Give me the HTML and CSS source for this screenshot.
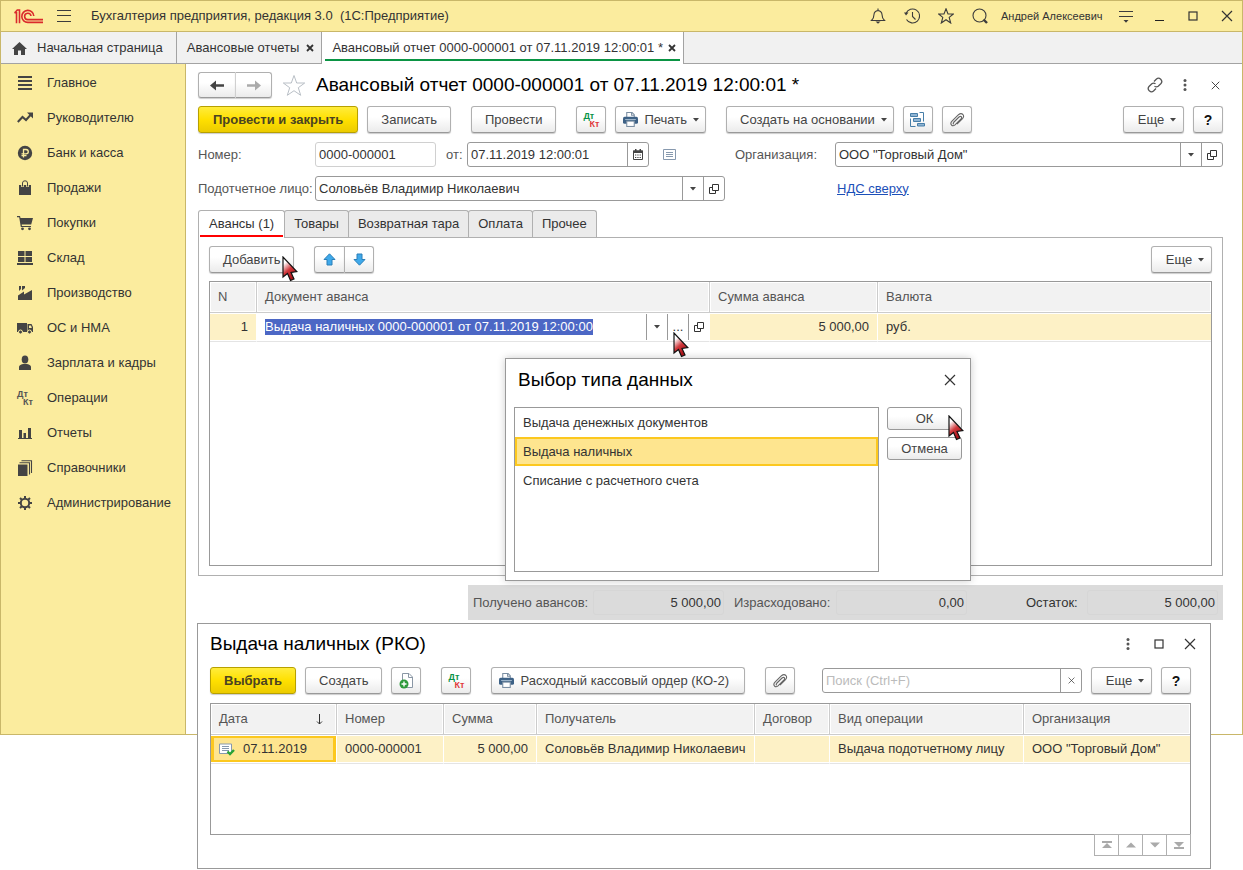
FILE: index.html
```html
<!DOCTYPE html>
<html lang="ru">
<head>
<meta charset="utf-8">
<title>Бухгалтерия предприятия</title>
<link rel="stylesheet" href="styles.css">
</head>
<body>
<svg class="sprite" aria-hidden="true">
  <defs><linearGradient id="cursorFill" x1="0" y1="0" x2=".5" y2="1"><stop offset=".25" stop-color="#fff"/><stop offset=".6" stop-color="#d0383c"/><stop offset="1" stop-color="#a81016"/></linearGradient></defs>
  <symbol id="i-close" viewBox="0 0 12 12"><path d="M1 1L11 11M11 1L1 11" fill="none" stroke="currentColor" stroke-width="1.2"/></symbol>
  <symbol id="i-close-bold" viewBox="0 0 8 8"><path d="M1 1L7 7M7 1L1 7" fill="none" stroke="currentColor" stroke-width="1.8"/></symbol>
  <symbol id="i-max" viewBox="0 0 12 12"><rect x="2" y="2" width="8" height="8" fill="none" stroke="currentColor" stroke-width="1.2"/></symbol>
  <symbol id="i-dots" viewBox="0 0 4 14"><circle cx="2" cy="2.5" r="1.5"/><circle cx="2" cy="7" r="1.5"/><circle cx="2" cy="11.5" r="1.5"/></symbol>
  <symbol id="i-caret" viewBox="0 0 6 4"><path d="M0 0H6L3 3.500Z"/></symbol>
  <symbol id="i-open" viewBox="0 0 10 10"><path d="M3.5 .5H9.5V6.5H3.5ZM3 3.5H.5V9.5H6.500V7" fill="none" stroke="currentColor"/></symbol>
  <symbol id="i-clip" viewBox="0 0 16 16"><path d="M4.500 10.500L10 5Q11.500 3.800 12.300 4.700Q13 5.600 12 6.800L6 12.800Q4 14.500 2.500 13Q1 11.300 3 9.200L9.500 2.700Q12 .7 13.900 2.500Q15.500 4.300 13.500 6.700L8 12.200M4.500 10.500Q3.700 12 5 12" fill="none" stroke="#666" stroke-width="1.1"/></symbol>
  <symbol id="i-print" viewBox="0 0 14 14"><path d="M3.500 5V.500H8.500L10.500 2.500V5" fill="#fff" stroke="#7b8fa3"/><path d="M8 .5V3H10.500" fill="none" stroke="#7b8fa3"/><rect y="4.500" width="14" height="6.500" rx="1.500" fill="#3d6186"/><path d="M2 7H12" stroke="#9db5cb"/><rect x="3.500" y="8.500" width="7" height="5" fill="#fff" stroke="#7b8fa3"/></symbol>
  <symbol id="i-cursor" viewBox="0 0 16 26"><path d="M1 1V21L5.500 17.500L8.500 24.500L12 23L9 16.500L14.800 15.500Z" fill="url(#cursorFill)" stroke="#111" stroke-width="1.2"/></symbol>
</svg>

<div class="desktop">
  <div class="app">
    <header class="titlebar">
      <svg class="logo" viewBox="0 0 29 15" width="29" height="15" fill="none" stroke="#da2a2c" stroke-width="1.600"><path d="M.5 3.800H2.500V14.200M.5 3.800Q2 2.500 3.300 1H5.500V14.200"/><path d="M19.800 7A6 6 0 1 0 14 13.400H29"/><path d="M17 7A3.200 3.200 0 1 0 14 10.600H29"/></svg>
      <button class="icon-btn" aria-label="Меню"><svg width="14" height="12" stroke="#3c3c3c"><path d="M0 .5H14M0 5.500H14M0 11.500H14"/></svg></button>
      <span class="app-title">Бухгалтерия предприятия, редакция 3.0&nbsp; (1С:Предприятие)</span>
      <div class="sys-icons">
        <button class="icon-btn" aria-label="Уведомления"><svg width="16" height="16" viewBox="0 0 16 16" fill="none" stroke="#3c3c3c" stroke-width="1.1"><path d="M1.500 12.500Q4 10 4 6.500Q4.200 3.300 8 2.500Q11.800 3.300 12 6.500Q12 10 14.500 12.500ZM8 2.500V.5"/><path d="M5.500 13.500H10.500L8 15.800Z" fill="#3c3c3c" stroke="none"/></svg></button>
        <button class="icon-btn" aria-label="История"><svg width="16" height="16" viewBox="0 0 16 16" fill="none" stroke="#3c3c3c" stroke-width="1.100"><path d="M2 5.500A7 7 0 1 1 2.500 11.500M8.500 4V8.500L11.500 11.500"/><path d="M0 4.500L4.500 4.500L2 7.500Z" fill="#3c3c3c" stroke="none"/></svg></button>
        <button class="icon-btn" aria-label="Избранное"><svg width="16" height="16" viewBox="0 0 16 16" fill="none" stroke="#3c3c3c" stroke-width="1.100"><path d="M8 .8L10 6H15.300L11.200 9.400L12.700 15L8 11.700L3.300 15L4.800 9.400L.7 6H6Z"/></svg></button>
        <button class="icon-btn" aria-label="Поиск"><svg width="16" height="16" viewBox="0 0 16 16" fill="none" stroke="#3c3c3c" stroke-width="1.100"><circle cx="7.500" cy="7.500" r="6.500"/><path d="M11.500 11.500L15 15" stroke-width="2.400"/></svg></button>
      </div>
      <span class="user">Андрей Алексеевич</span>
      <div class="win-icons">
        <button class="icon-btn" aria-label="Настройки"><svg width="14" height="13" stroke="#3c3c3c"><path d="M0 1.500H14M0 6.500H14"/><path d="M4.500 10H9.500L7 12.700Z" fill="#3c3c3c" stroke="none"/></svg></button>
        <button class="icon-btn" aria-label="Свернуть"><svg width="10" height="12" stroke="#222"><path d="M0 10.500H9"/></svg></button>
        <button class="icon-btn" aria-label="Развернуть"><svg width="12" height="12"><use href="#i-max"/></svg></button>
        <button class="icon-btn" aria-label="Закрыть"><svg width="12" height="12"><use href="#i-close"/></svg></button>
      </div>
    </header>

    <nav class="tabbar" aria-label="Открытые окна">
      <a class="wtab wtab-home" href="#"><svg width="15" height="13" viewBox="0 0 15 13" fill="#444"><path d="M7.500 0L15 7H13V13H9V8.500H6V13H2V7H0Z"/></svg>Начальная страница</a>
      <div class="wtab"><a href="#">Авансовые отчеты</a><button class="icon-btn" aria-label="Закрыть вкладку"><svg width="8" height="8"><use href="#i-close-bold"/></svg></button></div>
      <div class="wtab wtab-active"><a href="#">Авансовый отчет 0000-000001 от 07.11.2019 12:00:01 *</a><button class="icon-btn" aria-label="Закрыть вкладку"><svg width="8" height="8"><use href="#i-close-bold"/></svg></button></div>
    </nav>

    <div class="workspace">
      <nav class="sidebar" aria-label="Разделы">
        <a href="#"><svg viewBox="0 0 16 16"><path d="M1 1H15V3H1ZM1 5H15V7H1ZM1 9H15V11H1ZM1 13H15V15H1Z"/></svg>Главное</a>
        <a href="#"><svg viewBox="0 0 16 16"><path d="M.8 12L5.500 7L9 10L13.500 5" fill="none" stroke="#444" stroke-width="2"/><path d="M10 2.500H16V8.500Z"/></svg>Руководителю</a>
        <a href="#"><svg viewBox="0 0 16 16"><circle cx="8" cy="8" r="7.200"/><path d="M6.500 12.500V4.500H9Q11.300 4.700 11.300 6.700Q11.300 8.700 9 8.800H4.500M4.500 10.700H9.500" fill="none" stroke="#fbec9e" stroke-width="1.300"/></svg>Банк и касса</a>
        <a href="#"><svg viewBox="0 0 16 16"><path d="M2 5H14V15H2Z"/><path d="M5.500 7V3Q5.500 .8 8 .8Q10.500 .8 10.500 3V7" fill="none" stroke="#fbec9e" stroke-width="2.600"/><path d="M5.500 6.500V3Q5.500 .8 8 .8Q10.500 .8 10.500 3V6.500" fill="none" stroke="#444"/></svg>Продажи</a>
        <a href="#"><svg viewBox="0 0 16 16"><path d="M0 1H3L3.500 3H16L14.200 9.500H4.700L4.900 11H14V12H3.800L2.200 2.200H0Z"/><circle cx="5.500" cy="13.800" r="1.400"/><circle cx="12.500" cy="13.800" r="1.400"/></svg>Покупки</a>
        <a href="#"><svg viewBox="0 0 16 16"><path d="M1 1H7.500V6H1ZM8.500 1H15V6H8.500ZM1 7H7.500V12H1ZM8.500 7H15V12H8.500ZM0 13H16V15H0Z"/></svg>Склад</a>
        <a href="#"><svg viewBox="0 0 16 16"><path d="M1 15V10.500L7 6.500V9.500L15 5V15ZM2 1H4V4L2 6ZM5 1H8V3L5 5.500Z"/></svg>Производство</a>
        <a href="#"><svg viewBox="0 0 16 16"><path d="M0 3H10V12H0ZM10.500 4H14.500L16 7V12H10.500Z"/><path d="M12 5.500H14L14.800 8H12Z" fill="#fbec9e"/><g stroke="#fbec9e"><circle cx="3.500" cy="12" r="2"/><circle cx="12.500" cy="12" r="2"/></g></svg>ОС и НМА</a>
        <a href="#"><svg viewBox="0 0 16 16"><ellipse cx="8" cy="4.500" rx="3.300" ry="3.900"/><path d="M2 15V12Q2 10 6 9H10Q14 10 14 12V15Z"/></svg>Зарплата и кадры</a>
        <a href="#"><span class="dtkt dtkt-dark" aria-hidden="true"><b>Дт</b><b>Кт</b></span>Операции</a>
        <a href="#"><svg viewBox="0 0 16 16"><path d="M2 5H5V13H2ZM6.500 8H9V13H6.500ZM11 3H14V13H11ZM1 13H15V14H1Z"/></svg>Отчеты</a>
        <a href="#"><svg viewBox="0 0 16 16"><path d="M1 4.500H10.500V16H1Z"/><path d="M2.500 2.800H12.500V14.500M4.500 .8H14.500V13" fill="none" stroke="#444" stroke-width="1.100"/></svg>Справочники</a>
        <a href="#"><svg viewBox="0 0 16 16"><g fill="none" stroke="#444" stroke-width="2"><circle cx="8" cy="8" r="4.200"/><path d="M8 1V3.500M8 12.500V15M1 8H3.500M12.500 8H15M3 3L4.800 4.800M11.200 11.200L13 13M3 13L4.800 11.200M11.200 4.800L13 3"/></g></svg>Администрирование</a>
      </nav>

      <main class="doc">
        <div class="doc-head">
          <div class="btn-pair">
            <button class="btn" aria-label="Назад"><svg width="14" height="11" viewBox="0 0 14 11" fill="#444"><path d="M0 5.500L6 .5V4.200H14V6.800H6V10.500Z"/></svg></button>
            <button class="btn" aria-label="Вперед"><svg width="14" height="11" viewBox="0 0 14 11" fill="#aaa"><path d="M14 5.500L8 .5V4.200H0V6.800H8V10.500Z"/></svg></button>
          </div>
          <button class="icon-btn fav" aria-label="В избранное"><svg width="24" height="23" viewBox="0 0 24 23" fill="#fff" stroke="#b9bfc6"><path d="M12 1.500L14.700 9H22.700L16.300 13.700L18.700 21.300L12 16.700L5.300 21.300L7.700 13.700L1.300 9H9.300Z"/></svg></button>
          <h1>Авансовый отчет 0000-000001 от 07.11.2019 12:00:01 *</h1>
          <div class="doc-tools">
            <button class="icon-btn" aria-label="Ссылка"><svg width="16" height="16" viewBox="0 0 16 16" fill="none" stroke="#555" stroke-width="1.300"><path d="M7 4.500L9.500 2Q11.500 .2 13.700 2.200Q15.800 4.500 14 6.500L11.200 9.300Q9.300 10.500 7.500 9.200M9 11.500L6.500 14Q4.500 15.800 2.300 13.800Q.2 11.500 2 9.500L4.800 6.700Q6.700 5.500 8.500 6.800"/></svg></button>
            <button class="icon-btn" aria-label="Еще действия"><svg width="4" height="14" fill="#555"><use href="#i-dots"/></svg></button>
            <button class="icon-btn doc-close" aria-label="Закрыть документ"><svg width="9" height="9"><use href="#i-close"/></svg></button>
          </div>
        </div>

        <div class="commands">
          <button class="btn btn-primary btn-wide">Провести и закрыть</button>
          <button class="btn">Записать</button>
          <button class="btn group">Провести</button>
          <button class="btn btn-square group" aria-label="Дт Кт"><span class="dtkt"><b>Дт</b><b>Кт</b></span></button>
          <button class="btn btn-menu btn-print"><svg width="15" height="15"><use href="#i-print"/></svg>Печать<svg class="caret"><use href="#i-caret"/></svg></button>
          <button class="btn btn-menu group">Создать на основании<svg class="caret"><use href="#i-caret"/></svg></button>
          <button class="btn btn-square" aria-label="Структура подчиненности"><svg width="15" height="15" viewBox="0 0 15 15" fill="#8fb4d3" stroke="#477ea8"><path d="M.5 1.500H7.500V4.500H.5ZM3.500 6.500H10.500V9.500H3.500ZM7.500 11.500H14.500V14H7.500Z"/><path d="M9.500 .5H13.500V9.500M.5 6.500V14.500H5.500" fill="none"/></svg></button>
          <button class="btn btn-square" aria-label="Файлы"><svg width="16" height="16"><use href="#i-clip"/></svg></button>
          <button class="btn btn-menu btn-more push">Еще<svg class="caret"><use href="#i-caret"/></svg></button>
          <button class="btn btn-square btn-help">?</button>
        </div>

        <div class="fields">
          <div class="field-row">
            <label class="lbl" for="num">Номер:</label>
            <input class="box box-num" id="num" value="0000-000001">
            <label class="lbl-short" for="date">от:</label>
            <div class="combo combo-date"><input id="date" value="07.11.2019 12:00:01"><button aria-label="Календарь"><svg width="10" height="11" viewBox="0 0 10 11"><path d="M.5 2H9.500V10.500H.5Z" fill="none" stroke="#444"/><path d="M0 1.500H10V4H0ZM2 0H3.500V2H2ZM6.500 0H8V2H6.500Z" fill="#444"/><path d="M2 6H8M2 8.500H8" stroke="#444" stroke-dasharray="1.300 1"/></svg></button></div>
            <svg class="note" width="13" height="11" fill="none" stroke="#8799ae"><path d="M.5 .5H12.500V10.500H.5ZM3 3.500H10M3 5.500H10M3 7.500H10"/></svg>
          </div>
          <div class="field-row">
            <label class="lbl-org" for="org">Организация:</label>
            <div class="combo"><input id="org" value='ООО "Торговый Дом"'><button aria-label="Выбрать"><svg class="caret"><use href="#i-caret"/></svg></button><button aria-label="Открыть"><svg width="10" height="10"><use href="#i-open"/></svg></button></div>
          </div>
          <div class="field-row">
            <label class="lbl" for="person">Подотчетное лицо:</label>
            <div class="combo combo-person"><input id="person" value="Соловьёв Владимир Николаевич"><button aria-label="Выбрать"><svg class="caret"><use href="#i-caret"/></svg></button><button aria-label="Открыть"><svg width="10" height="10"><use href="#i-open"/></svg></button></div>
          </div>
          <div class="field-row"><a class="vat" href="#">НДС сверху</a></div>
        </div>

        <div class="tabs" role="tablist">
          <button role="tab" aria-selected="true">Авансы (1)</button><button role="tab" aria-selected="false">Товары</button><button role="tab" aria-selected="false">Возвратная тара</button><button role="tab" aria-selected="false">Оплата</button><button role="tab" aria-selected="false">Прочее</button>
        </div>
        <section class="panel">
          <div class="panel-tools">
            <button class="btn">Добавить</button>
            <div class="btn-pair group">
              <button class="btn" aria-label="Вверх"><svg width="13" height="13" viewBox="0 0 13 13" fill="#3fa9ea" stroke="#2a7fb8"><path d="M6.500 .8L12 6.500H9V12H4V6.500H1Z"/></svg></button>
              <button class="btn" aria-label="Вниз"><svg width="13" height="13" viewBox="0 0 13 13" fill="#3fa9ea" stroke="#2a7fb8"><path d="M6.500 12.200L12 6.500H9V1H4V6.500H1Z"/></svg></button>
            </div>
            <button class="btn btn-menu btn-more push">Еще<svg class="caret"><use href="#i-caret"/></svg></button>
          </div>
          <div class="grid-box grid-main">
            <table>
              <colgroup><col class="c-n"><col class="c-doc"><col class="c-sum"><col></colgroup>
              <thead><tr><th>N</th><th>Документ аванса</th><th>Сумма аванса</th><th>Валюта</th></tr></thead>
              <tbody><tr><td class="num">1</td>
                <td class="editing"><div class="editor"><input aria-label="Документ аванса" value="Выдача наличных 0000-000001 от 07.11.2019 12:00:00"><button class="push" aria-label="Список"><svg class="caret"><use href="#i-caret"/></svg></button><button>...</button><button aria-label="Открыть"><svg width="10" height="10"><use href="#i-open"/></svg></button></div></td>
                <td class="num">5 000,00</td><td>руб.</td></tr></tbody>
            </table>
          </div>
        </section>

        <div class="totals">
          <label class="t-a" for="got">Получено авансов:</label><output id="got">5 000,00</output>
          <label class="t-b" for="spent">Израсходовано:</label><output id="spent">0,00</output>
          <label class="t-c" for="rest">Остаток:</label><output id="rest">5 000,00</output>
        </div>
      </main>
    </div>
  </div>

  <section class="dialog" role="dialog" aria-labelledby="dlg-title">
    <div class="dialog-head"><h2 id="dlg-title">Выбор типа данных</h2><button class="icon-btn" aria-label="Закрыть"><svg width="12" height="12"><use href="#i-close"/></svg></button></div>
    <div class="dialog-body">
      <ul class="options" role="listbox" aria-labelledby="dlg-title">
        <li role="option" aria-selected="false">Выдача денежных документов</li>
        <li role="option" aria-selected="true">Выдача наличных</li>
        <li role="option" aria-selected="false">Списание с расчетного счета</li>
      </ul>
      <div class="dialog-actions"><button class="btn">ОК</button><button class="btn">Отмена</button></div>
    </div>
  </section>

  <section class="picker" role="dialog" aria-labelledby="pick-title">
    <div class="picker-head"><h2 id="pick-title">Выдача наличных (РКО)</h2>
      <button class="icon-btn" aria-label="Еще действия"><svg width="12" height="14" fill="#555"><use href="#i-dots"/></svg></button>
      <button class="icon-btn" aria-label="Развернуть"><svg width="12" height="12"><use href="#i-max"/></svg></button>
      <button class="icon-btn" aria-label="Закрыть"><svg width="12" height="12"><use href="#i-close"/></svg></button>
    </div>
    <div class="commands">
      <button class="btn btn-primary">Выбрать</button>
      <button class="btn">Создать</button>
      <button class="btn btn-square" aria-label="Скопировать"><svg width="15" height="16" viewBox="0 0 15 16"><path d="M3.500 .5H10L13.500 4V14.500H3.500Z" fill="#fff" stroke="#8a97a5"/><path d="M9.500 .5V4.500H13.500" fill="none" stroke="#8a97a5"/><circle cx="5" cy="11" r="4.500" fill="#2f9a3c"/><path d="M5 8.500V13.500M2.500 11H7.500" stroke="#fff" stroke-width="1.400"/></svg></button>
      <button class="btn btn-square group" aria-label="Дт Кт"><span class="dtkt"><b>Дт</b><b>Кт</b></span></button>
      <button class="btn btn-menu btn-print btn-order group"><svg width="15" height="15"><use href="#i-print"/></svg>Расходный кассовый ордер (КО-2)</button>
      <button class="btn btn-square group" aria-label="Файлы"><svg width="16" height="16"><use href="#i-clip"/></svg></button>
      <div class="combo combo-search push"><input aria-label="Поиск" placeholder="Поиск (Ctrl+F)"><button aria-label="Очистить"><svg width="7" height="7"><use href="#i-close"/></svg></button></div>
      <button class="btn btn-menu btn-more">Еще<svg class="caret"><use href="#i-caret"/></svg></button>
      <button class="btn btn-square btn-help">?</button>
    </div>
    <div class="grid-box grid-pick">
      <table>
        <colgroup><col class="p-date"><col class="p-num"><col class="p-sum"><col class="p-who"><col class="p-contract"><col class="p-kind"><col></colgroup>
        <thead><tr><th><span class="sorted">Дата<svg width="7" height="11" viewBox="0 0 7 11" fill="none" stroke="#333"><path d="M3.500 0V10M1 7.500L3.500 10L6 7.500"/></svg></span></th><th>Номер</th><th>Сумма</th><th>Получатель</th><th>Договор</th><th>Вид операции</th><th>Организация</th></tr></thead>
        <tbody><tr><td class="current"><span class="dated"><svg width="16" height="13" viewBox="0 0 16 13"><path d="M.5 1H12.500V10.500H.5Z" fill="#fff" stroke="#8799ae"/><path d="M3 3.500H10M3 5.500H10M3 7.500H10" stroke="#8799ae"/><path d="M8.500 8.500L11 11L15 7" fill="none" stroke="#2aa336" stroke-width="2.400"/></svg>07.11.2019</span></td><td>0000-000001</td><td class="num">5 000,00</td><td>Соловьёв Владимир Николаевич</td><td></td><td>Выдача подотчетному лицу</td><td>ООО "Торговый Дом"</td></tr></tbody>
      </table>
    </div>
    <div class="pager">
      <button aria-label="В начало"><svg width="10" height="8"><path d="M0 0H10V2H0ZM0 7L5 2L10 7Z"/></svg></button>
      <button aria-label="Вверх"><svg width="10" height="8"><path d="M0 6.500L5 1.500L10 6.500Z"/></svg></button>
      <button aria-label="Вниз"><svg width="10" height="8"><path d="M0 1.500L5 6.500L10 1.500Z"/></svg></button>
      <button aria-label="В конец"><svg width="10" height="8"><path d="M0 6H10V8H0ZM0 1L5 6L10 1Z"/></svg></button>
    </div>
  </section>

  <svg class="pointer pointer-add" aria-hidden="true"><use href="#i-cursor"/></svg>
  <svg class="pointer pointer-cell" aria-hidden="true"><use href="#i-cursor"/></svg>
  <svg class="pointer pointer-ok" aria-hidden="true"><use href="#i-cursor"/></svg>
</div>
</body>
</html>
```
FILE: styles.css
```css
* { box-sizing: border-box; }
body { margin: 0; background: #fff; color: #333; font: 13px/16px "Liberation Sans", Arial, sans-serif; }
button, input { font: inherit; color: inherit; margin: 0; }
button { padding: 0; border: 0; background: none; }
a { color: inherit; text-decoration: none; }
h1, h2 { margin: 0; color: #000; font-size: 19px; font-weight: 400; line-height: 22px; white-space: nowrap; }
svg { display: block; flex: none; }
.sprite { position: absolute; width: 0; height: 0; }

.desktop { position: relative; min-height: 100vh; }
.app { border: 1px solid #c9b769; background: #fff; }
.icon-btn { display: flex; align-items: center; justify-content: center; color: #333; }
.push { margin-left: auto; }

/* Title bar */
.titlebar { display: flex; align-items: center; height: 31px; padding: 0 9px 0 13px; background: #fbec9e; border-bottom: 1px solid #c9b769; }
.logo { margin-right: 14px; }
.app-title { margin-left: 20px; white-space: nowrap; }
.sys-icons { display: flex; gap: 18px; margin-left: auto; }
.user { width: 104px; margin: 0 14px 0 13px; font-size: 11px; white-space: nowrap; }
.win-icons { display: flex; gap: 22px; align-items: center; }

/* Window tabs */
.tabbar { display: flex; height: 32px; background: #f1f1f1; box-shadow: inset 0 -1px #a3a3a3; }
.wtab { display: flex; align-items: center; gap: 7px; padding: 0 7px 0 10px; border-right: 1px solid #a3a3a3; white-space: nowrap; }
.wtab-home { gap: 10px; padding: 0 13px 0 11px; }
.wtab-active { position: relative; gap: 5px; background: #fff; }
.wtab-active::after { content: ""; position: absolute; left: 3px; right: 3px; bottom: 3px; height: 2px; background: #0b9444; }

/* Sections */
.workspace { display: flex; }
.sidebar { width: 185px; flex: none; padding-top: 1px; background: #fbec9e; border-right: 1px solid #c9b769; }
.sidebar a { display: flex; align-items: center; gap: 14px; height: 35px; padding-left: 16px; white-space: nowrap; }
.sidebar svg { width: 16px; height: 16px; fill: #444; }
.dtkt { display: flex; flex-direction: column; width: 16px; font-size: 9px; line-height: 8px; text-align: left; }
.dtkt b:first-child { color: #0a9347; }
.dtkt b:last-child { color: #e0393c; align-self: flex-end; }
.dtkt-dark b:first-child, .dtkt-dark b:last-child { color: #555; }

/* Document */
.doc { flex: 1; min-width: 0; padding: 8px 19px 114px 12px; }
.doc-head { display: flex; align-items: center; height: 26px; margin-bottom: 8px; }
.fav { margin: 0 10px 0 10px; }
.doc-tools { display: flex; align-items: center; gap: 20px; margin-left: auto; }
.doc-close { width: 16px; }

.btn { display: flex; align-items: center; justify-content: center; height: 27px; padding: 0 13px; color: #444; background: linear-gradient(#fff 40%, #ebebeb); border: 1px solid #b0b0b0; border-bottom-color: #999; border-radius: 3px; box-shadow: 0 1px 1px #ccc; white-space: nowrap; }
.btn-primary { font-weight: 700; color: #4a4322; background: linear-gradient(#ffec3c, #ffe000 50%, #eccb00); border-color: #b7a000; }
.btn-wide { padding: 0 14px; }
.btn-square { width: 30px; padding: 0; }
.btn-help { font-weight: 700; color: #111; font-size: 14px; }
.btn-menu { gap: 6px; padding-right: 6px; }
.btn-print { padding-left: 7px; }
.btn-order { padding-right: 15px; }
.btn-more { width: 61px; }
.caret { width: 6px; height: 4px; fill: #444; }
.btn-pair { display: flex; }
.btn-pair .btn { width: 37px; height: 26px; padding: 0; }
.btn-pair .btn:first-child { border-radius: 3px 0 0 3px; border-right: 0; }
.btn-pair .btn:last-child { border-radius: 0 3px 3px 0; border-left-color: #d0d0d0; }

.commands { display: flex; align-items: center; gap: 9px; }
.commands .group { margin-left: 11px; }

.fields { display: grid; grid-template-columns: 537px 1fr; gap: 9px 0; margin-top: 9px; }
.field-row { display: flex; align-items: center; height: 25px; }
.lbl, .lbl-short, .lbl-org { color: #555; white-space: nowrap; flex: none; }
.lbl { width: 117px; }
.lbl-short { width: 31px; padding-left: 10px; }
.lbl-org { width: 100px; }
.box, .combo { height: 25px; border: 1px solid #999; border-radius: 3px; background: #fff; }
.box { padding: 0 3px; outline: 0; }
.box-num { width: 121px; border-color: #d0d0d0; }
.combo { display: flex; flex: 1; overflow: hidden; }
.combo input { flex: 1; min-width: 0; padding: 0 3px; border: 0; outline: 0; background: none; }
.combo input::placeholder { color: #bbb; }
.combo button { display: flex; align-items: center; justify-content: center; width: 21px; border-left: 1px solid #999; }
.combo-date { flex: 0 0 182px; }
.combo-person { flex: 0 0 410px; }
.note { margin-left: 14px; }
.vat { margin-left: 102px; color: #1c4fb8; text-decoration: underline; }

.tabs { display: flex; margin-top: 9px; }
.tabs button { height: 27px; padding: 0 9px; margin-right: -1px; border: 1px solid #b0b0b0; border-bottom: 0; border-radius: 3px 3px 0 0; background: #ebebeb; white-space: nowrap; }
.tabs [aria-selected="true"] { position: relative; z-index: 1; height: 28px; margin-bottom: -1px; padding: 0 10px 1px; background: #fff; }
.tabs [aria-selected="true"]::after { content: ""; position: absolute; left: 1px; right: 1px; bottom: 1px; height: 2px; background: #f00; }
.panel { padding: 8px 10px 9px; border: 1px solid #b0b0b0; }
.panel-tools { display: flex; gap: 9px; margin-bottom: 8px; }
.panel-tools .group { margin-left: 11px; }
.panel-tools .btn-pair .btn { width: 30px; height: 27px; }
.panel-tools .btn-pair .btn:last-child { border-left-color: #b0b0b0; }

/* Tables */
.grid-box { border: 1px solid #999; background: #fff; }
.grid-main { min-height: 285px; }
.grid-pick { min-height: 132px; }
table { width: 100%; table-layout: fixed; border-collapse: separate; border-spacing: 0; }
th, td { padding: 0 8px; text-align: left; font-weight: 400; white-space: nowrap; }
th { height: 31px; color: #555; background: #f2f2f2; border-right: 1px solid #ccc; border-bottom: 1px solid #ccc; box-shadow: inset 0 0 0 1px #fff; }
td { height: 29px; background: #fdf1c6; border-right: 1px solid #fff; border-bottom: 1px solid #e4e4e4; box-shadow: inset 0 1px #fff, inset 0 -1px #fff; }
th:last-child, td:last-child { border-right: 0; }
.num { text-align: right; }
.c-n { width: 47px; }
.c-doc { width: 453px; }
.c-sum { width: 168px; }
.editing { padding: 0 0 0 8px; background: #fff; }
.editor { display: flex; align-items: center; height: 26px; }
.editor input { field-sizing: content; height: 16px; padding: 0; border: 0; outline: 0; color: #fff; background: #4c67c5; }
.editor button { display: flex; align-items: center; justify-content: center; width: 21px; height: 26px; border-left: 1px solid #999; }

.totals { display: flex; align-items: center; width: max-content; height: 35px; margin: 9px 0 0 auto; padding: 0 5px; background: #dbdbdb; white-space: nowrap; }
.totals label { color: #555; }
.totals output { width: 131px; height: 25px; padding: 4px 2px; border: 1px solid #d6d6d6; border-radius: 3px; text-align: right; line-height: 16px; }
.t-a { width: 120px; }
.t-b { width: 112px; padding-left: 10px; }
.t-c { width: 120px; padding-left: 59px; }
.totals .t-c { color: #333; }

/* Type selection dialog */
.dialog { position: absolute; left: 505px; top: 358px; width: 466px; padding: 10px 8px 8px; background: #fff; border: 1px solid #999; box-shadow: 0 0 8px rgba(0, 0, 0, .2); }
.dialog-head { display: flex; justify-content: space-between; padding: 0 6px 0 4px; margin-bottom: 16px; }
.dialog-body { display: flex; gap: 8px; }
.options { flex: 1; min-height: 165px; margin: 0; padding: 0; list-style: none; border: 1px solid #999; }
.options li { display: flex; align-items: center; height: 29px; padding: 0 6px; border: 2px solid transparent; }
.options [aria-selected="true"] { background: #fee58f; border-color: #fcc81f; }
.dialog-actions { display: flex; flex-direction: column; gap: 7px; width: 75px; }
.dialog-actions .btn { height: 23px; padding: 0; box-shadow: none; border-color: #999; }

/* Cash order picker */
.picker { position: absolute; left: 197px; right: 32px; top: 623px; padding: 9px 19px 12px 12px; background: #fff; border: 1px solid #999; }
.picker-head { display: flex; align-items: center; gap: 19px; margin: 0 -5px 12px 0; }
.picker-head h2 { flex: 1; }
.picker .grid-box { margin-top: 9px; }
.combo-search { flex: 0 0 260px; }
.p-date { width: 126px; }
.p-num { width: 107px; }
.p-sum { width: 93px; }
.p-who { width: 218px; }
.p-contract { width: 75px; }
.p-kind { width: 194px; }
.sorted { display: flex; align-items: center; justify-content: space-between; padding-right: 5px; }
.dated { display: flex; align-items: center; gap: 8px; }
td.current { background: #fee58f; box-shadow: inset 0 1px #fff, inset 0 -1px #fff, inset 0 0 0 3px #fcc81f; }
.pager { display: flex; justify-content: flex-end; margin-top: -1px; }
.pager button { display: flex; align-items: center; justify-content: center; width: 25px; height: 22px; margin-left: -1px; border: 1px solid #b0b0b0; }
.pager svg { fill: #aaa; }

.pointer { position: absolute; width: 16px; height: 26px; }
.pointer-add { left: 282px; top: 256px; }
.pointer-cell { left: 673px; top: 332px; }
.pointer-ok { left: 948px; top: 415px; }
```
